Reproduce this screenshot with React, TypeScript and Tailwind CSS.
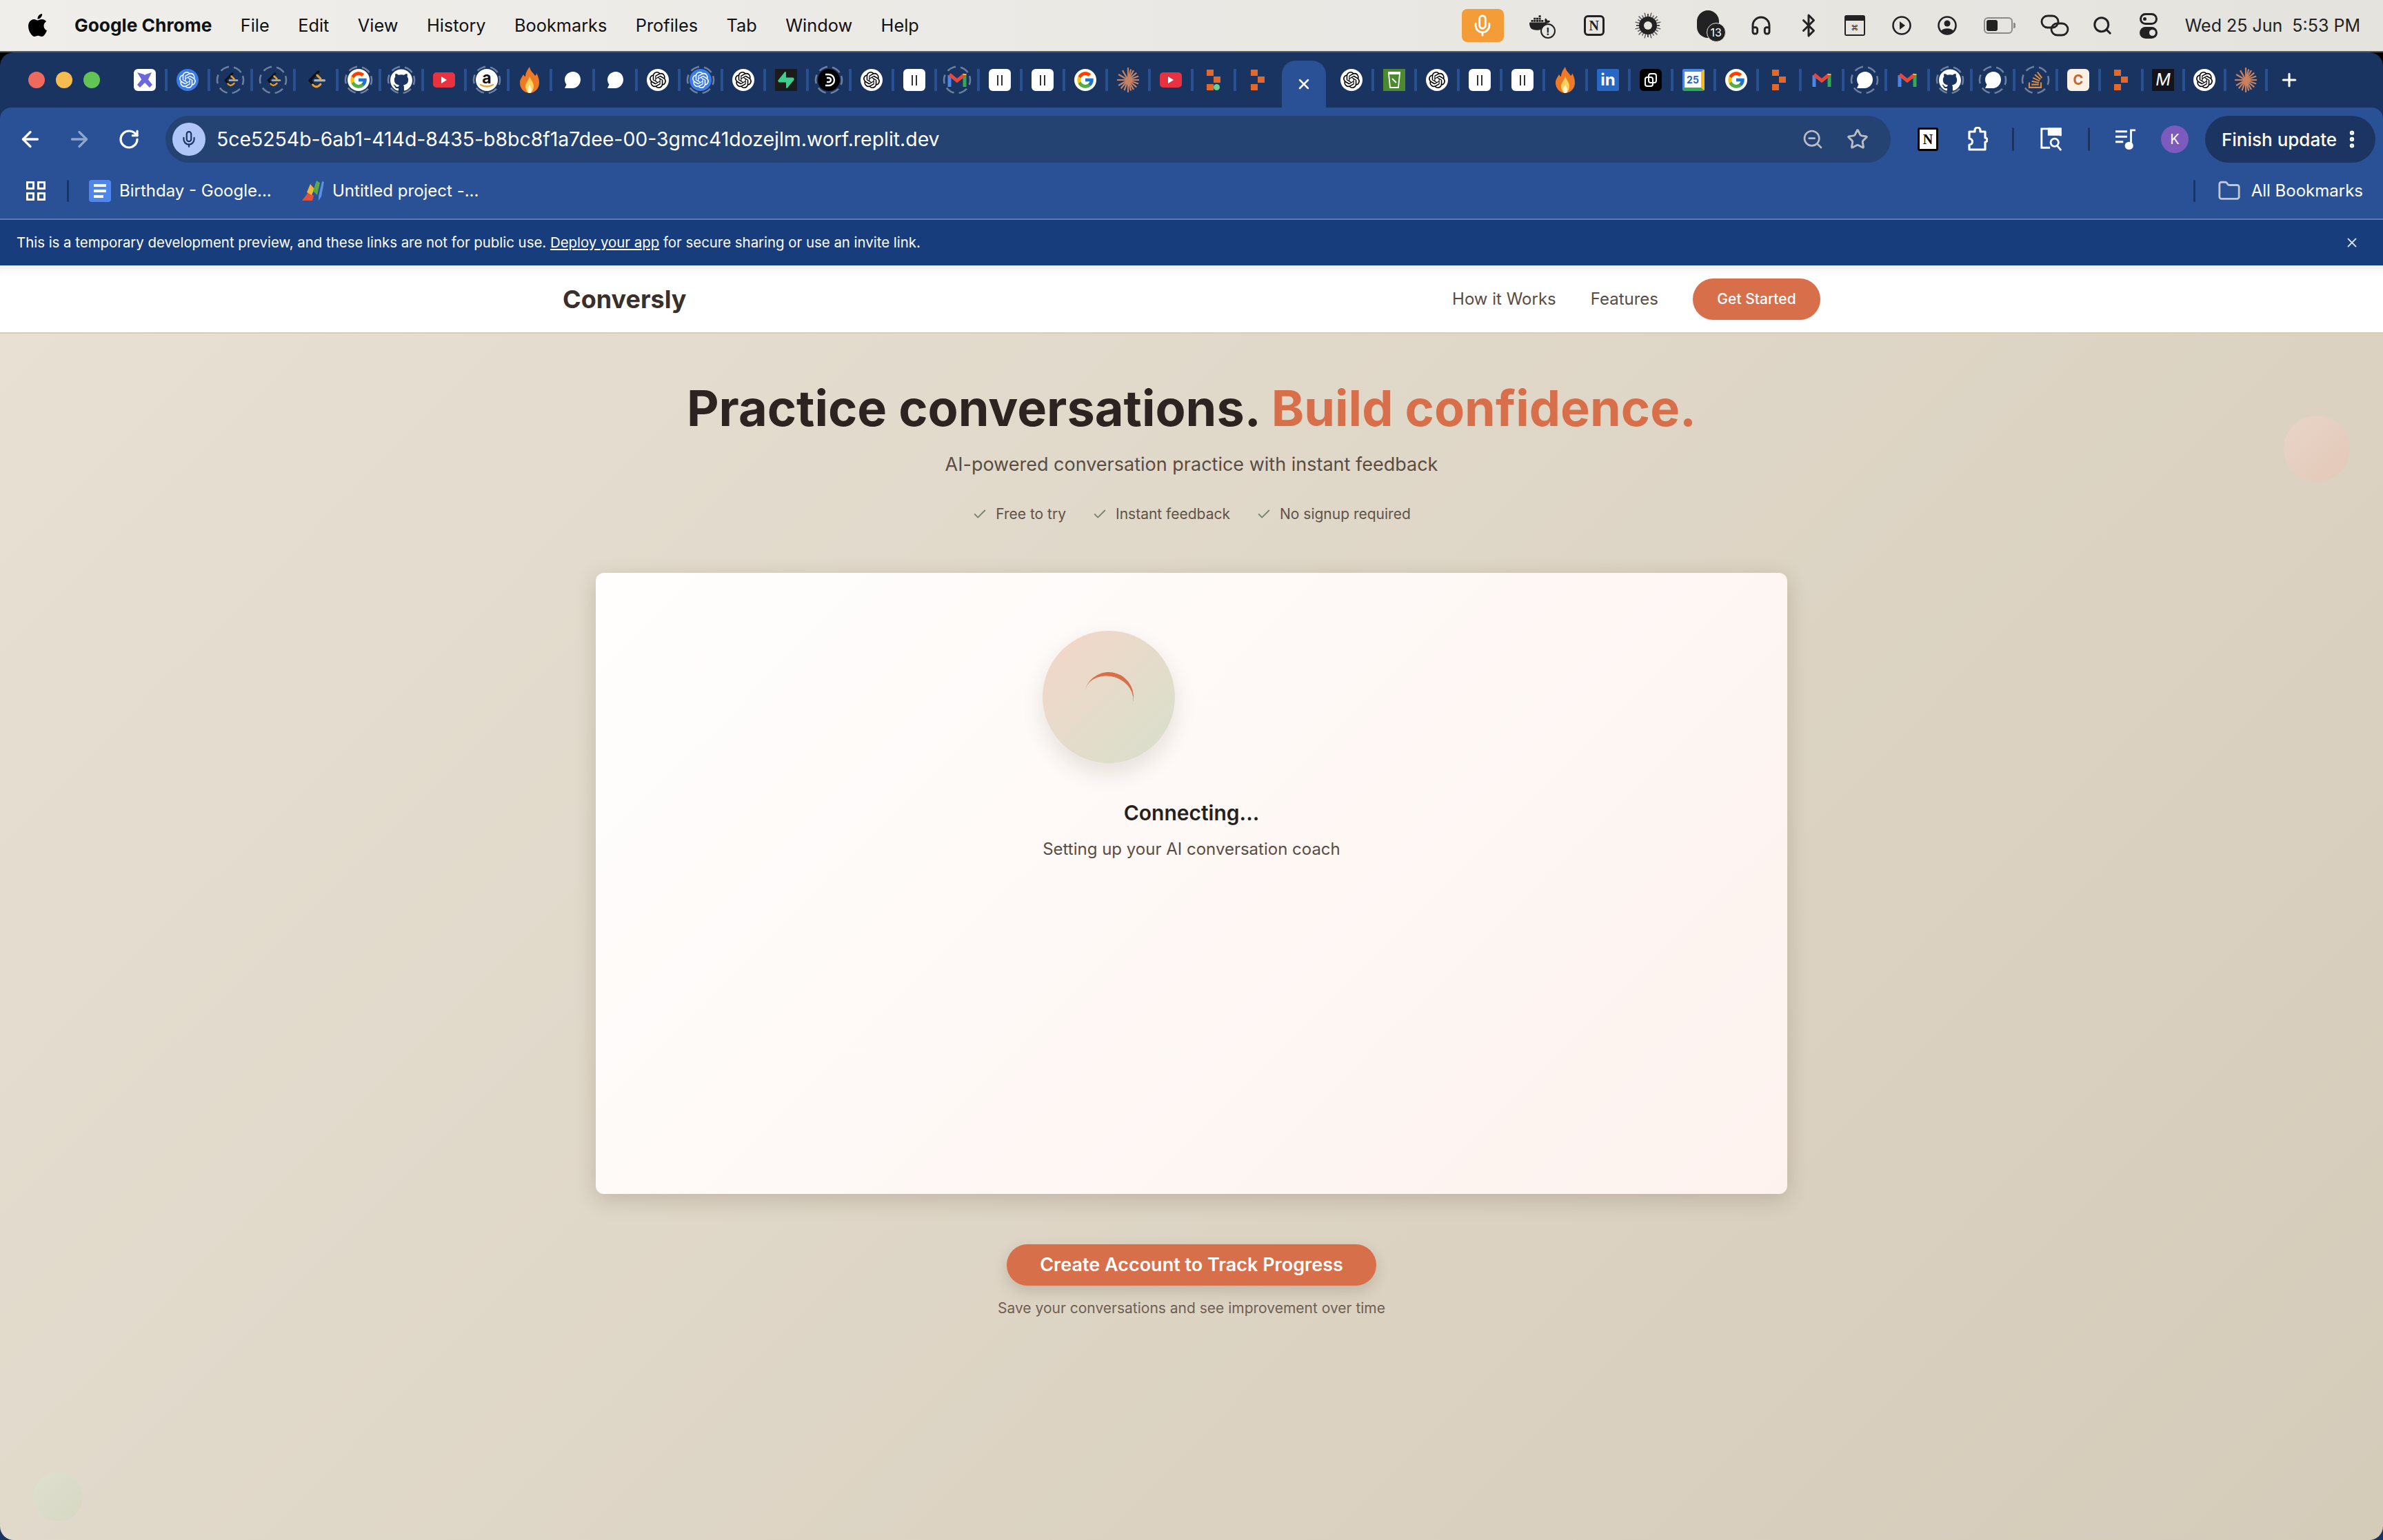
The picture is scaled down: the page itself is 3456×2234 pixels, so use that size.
import React from "react";
import { SiOpenai, SiGithub, SiSupabase, SiStackoverflow, SiDocker, SiApple } from "react-icons/si";
import { FcGoogle } from "react-icons/fc";
import { ArrowLeft, ArrowRight, RotateCw, ZoomOut, Star, EllipsisVertical, Folder, Check, X, Plus, Mic, Headphones, Bluetooth, Search } from "lucide-react";

const Ring = () => (
  <svg className="absolute left-1/2 top-1/2 -translate-x-1/2 -translate-y-1/2" width="42" height="42" viewBox="0 0 42 42">
    <circle cx="21" cy="21" r="19" fill="none" stroke="#6e80a0" strokeWidth="2.5" strokeDasharray="13 7" transform="rotate(-18 21 21)" />
  </svg>
);

const Leet = ({ small }: { small?: boolean }) => (
  <svg width={small ? 24 : 30} height={small ? 24 : 30} viewBox="0 0 24 24" fill="none" strokeLinecap="round" strokeLinejoin="round">
    <path d="M15 2.500 5 12.500l6 7" stroke="#111" strokeWidth="3" />
    <path d="M13.500 6.500 17.500 10.500M8.500 17.500q4 5 9-.5" stroke="#e9a030" strokeWidth="2.500" />
    <path d="M11 12.500h11" stroke="#b3b3b3" strokeWidth="2.500" />
  </svg>
);

const OpenAI = ({ blue }: { blue?: boolean }) => (
  <div className={blue ? "w-8 h-8 rounded-full bg-[#3b7de6] text-white flex items-center justify-center" : "w-8 h-8 rounded-full bg-white text-black flex items-center justify-center"}>
    <SiOpenai size={24} />
  </div>
);

const GoogleIcon = () => (
  <div className="w-8 h-8 rounded-full bg-white flex items-center justify-center">
    <FcGoogle size={28} />
  </div>
);

const Youtube = () => (
  <div className="w-8 h-[22px] rounded-[5px] bg-[#e9323f] flex items-center justify-center">
    <svg width="10" height="10" viewBox="0 0 10 10"><path d="M1 0l8 5-8 5z" fill="#fff" /></svg>
  </div>
);

const Amazon = () => (
  <div className="w-8 h-8 rounded-full bg-white flex items-center justify-center">
    <svg width="30" height="30" viewBox="0 0 30 30">
      <text x="15" y="20" textAnchor="middle" fontSize="23" fontWeight="700" fontFamily="Inter, sans-serif" fill="#111">a</text>
      <path d="M6 22q9 5 18 0" fill="none" stroke="#f0a030" strokeWidth="2.400" strokeLinecap="round" />
    </svg>
  </div>
);

const Fire = () => (
  <svg width="28" height="38" viewBox="0 0 28 38">
    <path d="M14 0c1 6 5 8 8 13 2-1 2-3 2-4 3 5 4 10 4 14 0 8-6 15-14 15S0 31 0 23c0-5 3-8 5-12 1 2 2 3 3 3 0-5 3-10 6-14z" fill="#ee7a28" />
    <path d="M14 14c1 4 6 8 6 14 0 5-3 10-6 10s-6-5-6-10c0-4 4-8 6-14z" fill="#ffd05a" />
    <path d="M14 26c1 2 3 4 3 7 0 3-1 5-3 5s-3-2-3-5c0-3 2-5 3-7z" fill="#fff6d8" />
  </svg>
);

const Chat = () => (
  <svg width="32" height="32" viewBox="0 0 32 32"><path d="M17 4c6.500 0 11 5 11 11.500S23 28 16 28H5l2.500-5.500C5.500 20 5 17.500 5 15.500 5 9 10.500 4 17 4z" fill="#fff" /></svg>
);

const Pause = () => (
  <div className="w-8 h-8 rounded-[6px] bg-white flex items-center justify-center gap-[4px]">
    <div className="w-[2px] h-[15px] bg-[#333]" />
    <div className="w-[2px] h-[15px] bg-[#333]" />
  </div>
);

const Gmail = () => (
  <svg width="28" height="24" viewBox="0 0 28 24" fill="none">
    <path d="M3 22V5" stroke="#4a86e8" strokeWidth="5" />
    <path d="M25 22V5" stroke="#34a853" strokeWidth="5" />
    <path d="M3 4l11 9 11-9" stroke="#e8453c" strokeWidth="5" />
    <path d="M25 5V3" stroke="#f6bb18" strokeWidth="5" />
  </svg>
);

const Burst = () => (
  <svg width="32" height="38" viewBox="0 0 32 38">
    {[0, 15, 30, 50, 70, 90, 110, 130, 150, 165, 180, 200, 220, 240, 270, 300, 330].map((a) => (
      <line key={a} x1="16" y1="19" x2="16" y2={a % 90 === 0 ? 1 : 3} stroke="#c98261" strokeWidth="2.200" transform={`rotate(${a} 16 19)`} />
    ))}
  </svg>
);

const Replit = ({ dot }: { dot?: boolean }) => (
  <div className="grid grid-cols-2 grid-rows-3 w-[20px] h-[30px] gap-y-[1px]">
    <div className="bg-[#e4682a] w-[10px] h-[9px]" />
    <div />
    <div />
    <div className="bg-[#e4682a] w-[10px] h-[9px]" />
    <div className="bg-[#e4682a] w-[10px] h-[9px]" />
    {dot ? <div className="bg-[#6fd08c] w-[9px] h-[9px] rounded-full" /> : <div />}
  </div>
);

const Tile = ({ className, children }: { className: string; children?: React.ReactNode }) => (
  <div className={"w-8 h-8 flex items-center justify-center overflow-hidden " + className}>{children}</div>
);

const RocketX = () => (
  <Tile className="rounded-[6px] bg-white">
    <svg width="28" height="28" viewBox="0 0 28 28" fill="#6c68dc">
      <path d="M3 3l10 3 12 15-4 4L9 13z" />
      <path d="M24 3l-9 3-12 15 4 4L19 13z" />
    </svg>
  </Tile>
);

const Dd = () => (
  <div className="w-8 h-8 rounded-full bg-black flex items-center justify-center">
    <svg width="22" height="22" viewBox="0 0 22 22" fill="none" stroke="#fff" strokeWidth="2.400">
      <path d="M6 3h5a8 8 0 0 1 0 16H6" />
      <path d="M8 8h3a3 3 0 0 1 0 6H8" />
    </svg>
  </div>
);

const tabs: React.ReactNode[] = [
  <RocketX />,
  <OpenAI blue />,
  <><Ring /><Leet small /></>,
  <><Ring /><Leet small /></>,
  <Leet />,
  <><Ring /><GoogleIcon /></>,
  <><Ring /><SiGithub size={32} color="#fff" /></>,
  <Youtube />,
  <><Ring /><Amazon /></>,
  <Fire />,
  <Chat />,
  <Chat />,
  <OpenAI />,
  <><Ring /><OpenAI blue /></>,
  <OpenAI />,
  <Tile className="bg-[#1c1c1c]"><SiSupabase size={24} color="#3ecf8e" /></Tile>,
  <><Ring /><Dd /></>,
  <OpenAI />,
  <Pause />,
  <><Ring /><Gmail /></>,
  <Pause />,
  <Pause />,
  <GoogleIcon />,
  <Burst />,
  <Youtube />,
  <Replit dot />,
  <Replit />,
];

const tabsAfter: React.ReactNode[] = [
  <OpenAI />,
  <Tile className="bg-[#4b8a2e]">
    <svg width="24" height="28" viewBox="0 0 24 28" fill="none" stroke="#fff" strokeWidth="1.800">
      <path d="M4 5h16l-2 20H6z" /><path d="M3 3h18M9 12l6 6" />
    </svg>
  </Tile>,
  <OpenAI />,
  <Pause />,
  <Pause />,
  <Fire />,
  <Tile className="bg-[#2867c2] rounded-[2px]"><span className="text-white font-bold text-[24px] leading-none">in</span></Tile>,
  <Tile className="bg-black rounded-[6px]">
    <svg width="24" height="24" viewBox="0 0 24 24" fill="none" stroke="#fff" strokeWidth="2">
      <rect x="9" y="3" width="11" height="13" rx="3" /><rect x="4" y="8" width="11" height="13" rx="3" />
    </svg>
  </Tile>,
  <div className="w-8 h-8 bg-white rounded-[3px] border-t-[4px] border-t-[#4a86e8] border-r-[5px] border-r-[#f6bb18] border-b-[5px] border-b-[#34a853] border-l-[3px] border-l-[#4a86e8] flex items-center justify-center">
    <span className="text-[#2a62c4] text-[14px] font-bold leading-none">25</span>
  </div>,
  <GoogleIcon />,
  <Replit />,
  <Gmail />,
  <><Ring /><Chat /></>,
  <Gmail />,
  <><Ring /><SiGithub size={32} color="#fff" /></>,
  <><Ring /><Chat /></>,
  <><Ring /><SiStackoverflow size={24} color="#e0893a" /></>,
  <Tile className="bg-[#faf1e4] rounded-[6px]"><span className="text-[#bb6a35] font-bold text-[20px] leading-none">C</span></Tile>,
  <Replit />,
  <Tile className="bg-[#14141c]"><span className="text-white italic text-[24px] leading-none">M</span></Tile>,
  <OpenAI />,
  <Burst />,
];

const TabCell = ({ children }: { children: React.ReactNode }) => (
  <div className="relative w-[62px] h-[32px] shrink-0 flex items-center justify-center border-r-4 border-r-[#2a5094]">{children}</div>
);
const TabCellNarrow = ({ children }: { children: React.ReactNode }) => (
  <div className="relative w-[60px] h-[32px] shrink-0 flex items-center justify-center border-r-4 border-r-[#2a5094]">{children}</div>
);
const TabCellPlain = ({ children }: { children: React.ReactNode }) => (
  <div className="relative w-[62px] h-[32px] shrink-0 flex items-center justify-center">{children}</div>
);

const MenuItem = ({ label }: { label: string }) => <span className="text-[25.300px] text-[#111] leading-none">{label}</span>;

const Dark = "#222";

function MenuBar() {
  return (
    <div className="h-[74px] shrink-0 flex items-center bg-[linear-gradient(90deg,#efeeea,#e4e3de)] border-b-2 border-b-[#5c5c5a] box-content">
      <div className="ml-[38px] mr-[37px] mb-[2px]"><SiApple size={33} color="#000" /></div>
      <div className="flex items-center gap-[41.500px]">
        <span className="text-[26.300px] font-bold text-[#111] leading-none">Google Chrome</span>
        <MenuItem label="File" />
        <MenuItem label="Edit" />
        <MenuItem label="View" />
        <MenuItem label="History" />
        <MenuItem label="Bookmarks" />
        <MenuItem label="Profiles" />
        <MenuItem label="Tab" />
        <MenuItem label="Window" />
        <MenuItem label="Help" />
      </div>
      <div className="ml-auto flex items-center mr-[33px]">
        <div className="w-[61px] h-[48px] rounded-[8px] bg-[#f49c38] flex items-center justify-center"><Mic size={34} color="#fff" strokeWidth={2} /></div>
        <div className="ml-[37px] w-[38px] h-[38px] relative">
          <SiDocker size={30} color={Dark} />
          <div className="absolute right-0 bottom-0 w-[22px] h-[22px] rounded-full border-2 border-[#222] bg-[#e8e7e2] flex items-center justify-center text-[15px] font-bold leading-none text-[#222]">!</div>
        </div>
        <div className="ml-[41px] w-[30px] h-[30px] rounded-[6px] border-[3px] border-[#222] flex items-center justify-center">
          <span className="text-[20px] font-bold leading-none text-[#222] [font-family:'Liberation_Serif',serif]">N</span>
        </div>
        <div className="ml-[43px] w-[40px] h-[40px]">
          <svg width="40" height="40" viewBox="0 0 40 40">
            {Array.from({ length: 24 }).map((_, i) => (
              <line key={i} x1="20" y1="20" x2="20" y2={i % 2 ? 1 : 3} stroke={i % 6 === 0 ? "#222" : "#666"} strokeWidth="1.600" transform={`rotate(${i * 15} 20 20)`} />
            ))}
            <circle cx="20" cy="20" r="13" fill="#222" />
            <circle cx="20" cy="20" r="6" fill="#e6e5e0" />
          </svg>
        </div>
        <div className="ml-[51px] w-[40px] h-[48px] relative">
          <div className="absolute left-0 top-[2px] w-[32px] h-[40px] rounded-full bg-[#222]" />
          <div className="absolute right-[-2px] bottom-0 w-[28px] h-[28px] rounded-full bg-[#222] border border-[#e6e5e0] flex items-center justify-center text-white text-[16px] leading-none">13</div>
        </div>
        <div className="ml-[38px] w-[30px] flex justify-center"><Headphones size={32} color={Dark} strokeWidth={2.200} className="shrink-0" /></div>
        <div className="ml-[45px] w-[18px] flex justify-center"><Bluetooth size={36} color={Dark} strokeWidth={2} className="shrink-0" /></div>
        <div className="ml-[43px] w-[30px] h-[30px] rounded-[3px] bg-[#222] flex flex-col justify-end p-[2px]">
          <div className="bg-[#e6e5e0] h-[20px] flex items-center justify-center text-[11px] leading-none text-[#222]">⌘</div>
        </div>
        <svg className="ml-[39px]" width="28" height="28" viewBox="0 0 28 28">
          <circle cx="14" cy="14" r="12.500" fill="none" stroke={Dark} strokeWidth="2.600" />
          <path d="M11 8l8 6-8 6z" fill={Dark} />
        </svg>
        <svg className="ml-[38px]" width="28" height="28" viewBox="0 0 28 28">
          <circle cx="14" cy="14" r="12.500" fill="none" stroke={Dark} strokeWidth="2.600" />
          <circle cx="14" cy="11" r="4.500" fill={Dark} />
          <path d="M5 22c3-5 15-5 18 0-4 5-14 5-18 0z" fill={Dark} />
        </svg>
        <div className="ml-[39px] w-[46px] h-[24px] flex items-center">
          <div className="w-[42px] h-[24px] rounded-[6px] border-2 border-[#8a8a88] p-[2px]"><div className="w-[16px] h-full bg-[#222] rounded-[3px]" /></div>
          <div className="w-[3px] h-[8px] bg-[#8a8a88] rounded-r-[2px] ml-[1px]" />
        </div>
        <svg className="ml-[36px]" width="42" height="32" viewBox="0 0 42 32" fill="none" stroke={Dark} strokeWidth="2.800">
          <rect x="2" y="2" width="24" height="17" rx="8.500" />
          <rect x="16" y="13" width="24" height="17" rx="8.500" />
        </svg>
        <div className="ml-[35px] w-[26px] flex justify-center"><Search size={30} color={Dark} strokeWidth={2.400} className="shrink-0" /></div>
        <div className="ml-[41px] w-[26px] flex flex-col gap-[3px]">
          <div className="h-[17px] rounded-full border-[3px] border-[#222] flex items-center"><div className="w-[5px] h-[5px] bg-[#222] rounded-full ml-[2px]" /></div>
          <div className="h-[17px] rounded-full bg-[#222] flex items-center justify-end"><div className="w-[9px] h-[9px] bg-[#e6e5e0] rounded-full mr-[3px]" /></div>
        </div>
        <span className="ml-[40px] text-[25px] text-[#222] leading-none whitespace-pre">Wed 25 Jun  5:53 PM</span>
      </div>
    </div>
  );
}

function TabStrip() {
  return (
    <div className="h-[80px] shrink-0 flex pl-[41px]">
      <div className="flex items-start pt-[28px] gap-[16px] w-[140px]">
        <div className="w-[24px] h-[24px] rounded-full bg-[#ee6a5f]" />
        <div className="w-[24px] h-[24px] rounded-full bg-[#f5bd4f]" />
        <div className="w-[24px] h-[24px] rounded-full bg-[#61c454]" />
      </div>
      <div className="flex items-start pt-[24px]">
        {tabs.map((t, i) => i < tabs.length - 1 ? <TabCell key={i}>{t}</TabCell> : <TabCellPlain key={i}>{t}</TabCellPlain>)}
        <div className="ml-[4px] mr-[8px] w-[64px] h-[68px] -mt-[12px] rounded-t-[20px] bg-[#2a5196] flex items-center justify-center shrink-0">
          <X size={24} color="#fff" strokeWidth={2.500} />
        </div>
        {tabsAfter.map((t, i) => i < 19 ? <TabCell key={i}>{t}</TabCell> : <TabCellNarrow key={i}>{t}</TabCellNarrow>)}
        <div className="w-[62px] h-[32px] flex items-center justify-center"><Plus size={30} color="#fff" strokeWidth={2.500} /></div>
      </div>
    </div>
  );
}

function Toolbar() {
  return (
    <div className="h-[80px] shrink-0 flex items-start bg-[#2a5196] rounded-t-[16px] pt-[12px]">
      <div className="w-[240px] h-[68px] flex items-center shrink-0 pl-[26px]">
        <ArrowLeft size={36} color="#fff" strokeWidth={2.200} />
        <ArrowRight size={36} color="#8ea6cf" strokeWidth={2.200} className="ml-[35px]" />
        <RotateCw size={32} color="#fff" strokeWidth={2.400} className="ml-[38px]" />
      </div>
      <div className="w-[2502px] h-[68px] rounded-full bg-[#244272] flex items-center pl-[10px] pr-[32px] shrink-0">
        <div className="w-[48px] h-[48px] rounded-full bg-[#aec6f8] flex items-center justify-center"><Mic size={26} color="#1b3560" strokeWidth={2} /></div>
        <span className="ml-[16px] text-white text-[28.400px] leading-none">5ce5254b-6ab1-414d-8435-b8bc8f1a7dee-00-3gmc41dozejlm.worf.replit.dev</span>
        <ZoomOut size={32} color="#b9bcc4" strokeWidth={2} className="ml-auto" />
        <Star size={32} color="#b9bcc4" strokeWidth={2.200} className="ml-[33px]" />
      </div>
      <div className="flex items-center h-[68px]">
        <div className="ml-[39px] w-[30px] h-[34px] bg-white border-[3px] border-black rounded-[3px] flex items-center justify-center">
          <span className="text-[20px] font-bold leading-none text-black [font-family:'Liberation_Serif',serif]">N</span>
        </div>
        <svg className="ml-[42px]" width="30" height="36" viewBox="0 0 30 36" fill="none" stroke="#fff" strokeWidth="3.200" strokeLinejoin="round">
          <path d="M3 7h8V5a4 4 0 0 1 8 0v2h7v9a3 3 0 0 1 0 6v11H3v-7a4 4 0 0 0 0-9z" />
        </svg>
        <div className="ml-[35px] w-[3px] h-[34px] rounded-full bg-[#1a3461]" />
        <svg className="ml-[37px]" width="34" height="38" viewBox="0 0 36 38" fill="none" stroke="#fff" strokeWidth="3">
          <path d="M16 32H3V3h29v11" />
          <path d="M14 3h18v9H14z" fill="#fff" />
          <circle cx="23" cy="24" r="6" />
          <path d="M27 29l6 7" />
        </svg>
        <div className="ml-[36px] w-[3px] h-[34px] rounded-full bg-[#1a3461]" />
        <svg className="ml-[37px]" width="30" height="34" viewBox="0 0 32 34" fill="none" stroke="#fff" strokeWidth="3">
          <path d="M0 5h18M0 13h18M0 21h12" />
          <path d="M24 26V3h7" />
          <ellipse cx="21" cy="27" rx="5" ry="4.500" fill="#fff" />
        </svg>
        <div className="ml-[36px] w-[40px] h-[40px] rounded-full bg-[#7d5bbe] flex items-center justify-center text-white text-[20px] leading-none">K</div>
        <div className="ml-[24px] w-[247px] h-[68px] rounded-full bg-[#1b3461] flex items-center pl-[24px] text-white text-[26px]">
          <span className="font-medium">Finish update</span>
          <EllipsisVertical size={32} color="#fff" strokeWidth={2.800} className="ml-[6px]" />
        </div>
      </div>
    </div>
  );
}

function BookmarkBar() {
  return (
    <div className="h-[83px] shrink-0 flex items-center bg-[#2a5196] border-b-2 border-b-[#5a7cb0] text-white text-[24px] leading-none">
      <div className="ml-[38px] grid grid-cols-2 gap-[4px] w-[28px] h-[28px]">
        <div className="border-[3px] border-white" /><div className="border-[3px] border-white" />
        <div className="border-[3px] border-white" /><div className="border-[3px] border-white" />
      </div>
      <div className="ml-[31px] w-[3px] h-[32px] bg-[#1a3461] rounded-full" />
      <div className="ml-[29px] w-[32px] h-[32px] rounded-[4px] bg-[#4f86ec] flex flex-col items-center justify-center gap-[4px]">
        <div className="w-[18px] h-[4px] bg-white" /><div className="w-[18px] h-[4px] bg-white" /><div className="w-[14px] h-[4px] bg-white self-start ml-[7px]" />
      </div>
      <span className="ml-[12px] w-[220px] whitespace-nowrap">Birthday - Google...</span>
      <svg className="ml-[45px]" width="32" height="32" viewBox="0 0 32 32">
        <path d="M0 30l9-12 8 5-2 7z" fill="#e0523c" />
        <path d="M7 18 12 6l6 7-4 9z" fill="#eeb63a" />
        <path d="M16 16 21 1l5 3-4 18z" fill="#5aa848" />
        <path d="M24 24 29 2l3 1-4 21-4 6z" fill="#5b8fe8" />
      </svg>
      <span className="ml-[12px]">Untitled project -...</span>
      <div className="ml-auto w-[3px] h-[32px] bg-[#1a3461] rounded-full" />
      <Folder size={34} color="#c4c7cc" strokeWidth={2} className="ml-[32px]" />
      <span className="ml-[15px] mr-[29px]">All Bookmarks</span>
    </div>
  );
}

function Banner() {
  return (
    <div className="h-[66px] shrink-0 flex items-center bg-[#173d7c] pl-[24px] pr-[34px] text-white text-[20.400px] leading-none">
      <span>This is a temporary development preview, and these links are not for public use. <span className="underline">Deploy your app</span> for secure sharing or use an invite link.</span>
      <X size={22} color="#d5dbe6" strokeWidth={2} className="ml-auto" />
    </div>
  );
}

function Nav() {
  return (
    <div className="h-[99px] shrink-0 bg-white border-b-2 border-b-[#d6ccbc] shadow-[inset_0_12px_12px_-10px_rgba(0,0,0,0.12)]">
      <div className="w-[1824px] h-full mx-auto flex items-center">
        <span className="text-[36px] font-bold text-[#3a2f29] leading-none">Conversly</span>
        <span className="ml-auto text-[24px] text-[#5a4c42] leading-none">How it Works</span>
        <span className="ml-[50px] text-[24px] text-[#5a4c42] leading-none">Features</span>
        <div className="ml-[50px] w-[185px] h-[60px] rounded-full bg-[#d76f4b] text-white text-[21px] font-medium flex items-center justify-center shadow-sm">Get Started</div>
      </div>
    </div>
  );
}

const CheckItem = ({ label, className }: { label: string; className?: string }) => (
  <div className={"flex items-center gap-[12px] " + (className ?? "")}>
    <Check size={22} color="#71876a" strokeWidth={2} />
    <span className="text-[21px] leading-[32px] text-[#5f5347]">{label}</span>
  </div>
);

function Hero() {
  return (
    <div className="relative flex-1 flex flex-col items-center bg-[linear-gradient(135deg,#e7e0d3_0%,#d5cbb9_100%)] rounded-b-[20px] overflow-hidden">
      <div className="absolute left-[3312px] top-[119px] w-[96px] h-[96px] rounded-full bg-[linear-gradient(135deg,#e8d5c8,#e3c8b7)]" />
      <div className="absolute left-[48px] top-[1651px] w-[72px] h-[72px] rounded-full bg-[linear-gradient(135deg,#dfe0cf,#d5d8c3)]" />
      <h1 className="mt-[64px] text-[72px] leading-[88px] font-bold text-[#2d2320]">
        Practice conversations. <span className="text-[#d76f4b]">Build confidence.</span>
      </h1>
      <p className="mt-[18px] text-[27px] leading-[40px] text-[#5a4c42]">AI-powered conversation practice with instant feedback</p>
      <div className="mt-[36px] flex items-center">
        <CheckItem label="Free to try" />
        <CheckItem label="Instant feedback" className="ml-[38px]" />
        <CheckItem label="No signup required" className="ml-[38px]" />
      </div>
      <div className="mt-[69px] w-[1728px] h-[901px] rounded-[12px] bg-[linear-gradient(135deg,#fffefd_0%,#fdf2ee_100%)] shadow-[0_8px_32px_rgba(70,50,30,0.2)] flex flex-col items-center pt-[84px]">
        <div className="flex flex-col items-start">
          <div className="w-[192px] h-[192px] rounded-full bg-[linear-gradient(135deg,#f5d6c8_0%,#d6e0cc_100%)] shadow-[0_14px_32px_rgba(60,40,20,0.12)] flex items-center justify-center">
            <div className="w-[72px] h-[72px] rounded-full border-t-[6px] border-t-[#d76f4b] rotate-[18deg]" />
          </div>
          <div className="w-full mt-[50px] text-center text-[30px] leading-[44px] font-semibold text-[#27211d]">Connecting...</div>
          <div className="mt-[13px] text-center text-[24px] leading-[36px] text-[#5a4c42]">Setting up your AI conversation coach</div>
        </div>
      </div>
      <div className="mt-[73px] w-[536px] h-[60px] rounded-full bg-[#d76f4b] text-white text-[27px] font-semibold flex items-center justify-center shadow-[0_8px_20px_rgba(70,50,30,0.18)]">Create Account to Track Progress</div>
      <p className="mt-[17px] text-[21px] leading-[32px] text-[#6e6052]">Save your conversations and see improvement over time</p>
    </div>
  );
}

export default function App() {
  return (
    <div className="w-[3456px] h-[2234px] overflow-hidden bg-black flex flex-col [font-family:Inter,sans-serif] antialiased">
      <MenuBar />
      <div className="flex-1 flex flex-col bg-[#1a3461] rounded-t-[20px] min-h-0">
        <TabStrip />
        <Toolbar />
        <BookmarkBar />
        <Banner />
        <Nav />
        <Hero />
      </div>
    </div>
  );
}
